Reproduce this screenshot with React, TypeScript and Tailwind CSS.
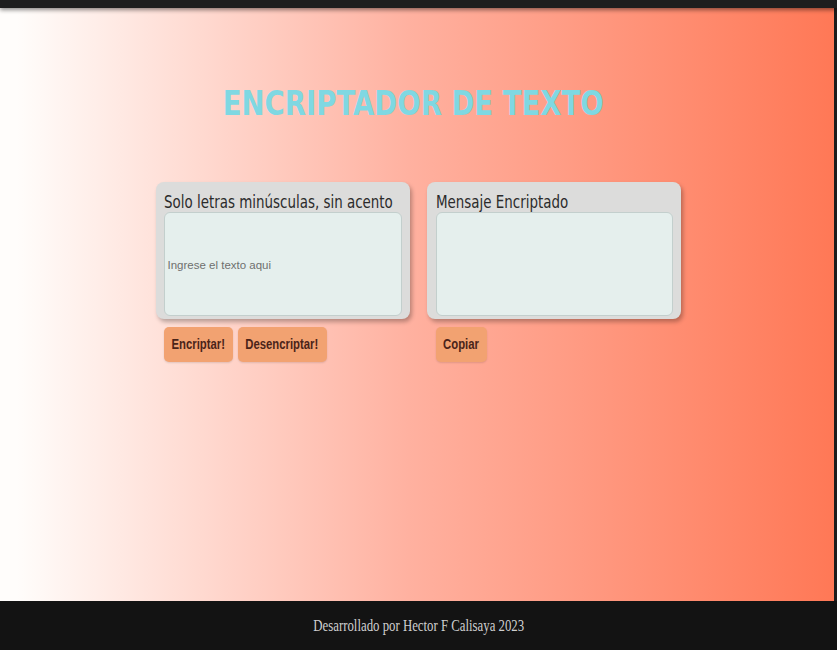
export default function App() {
  return (
    <div className="flex h-[650px] w-full flex-col bg-[#1c1c1c]">
      {/* Top bar */}
      <div className="relative z-10 h-2 w-full bg-[#1e1e1e] shadow-[0_2px_4px_rgba(0,0,0,0.45)]" />

      {/* Main */}
      <main className="mr-[3px] flex flex-1 flex-col items-center bg-[linear-gradient(to_right,#fffdfb_2%,#ffb1a0_49%,#ff7856_100%)]">
        <h1 className="mt-[78px] flex w-full justify-center pr-[8px] text-[34px] leading-[34px] font-bold text-[#7fd8e2] [font-family:'DejaVu_Sans',sans-serif]">
          <span className="inline-block scale-x-[0.81] whitespace-nowrap">ENCRIPTADOR DE TEXTO</span>
        </h1>

        <div className="mt-[62px] ml-[2px] flex gap-[17px]">
          {/* Input column */}
          <div className="flex flex-col">
            <div className="flex h-[137px] w-[254px] flex-col rounded-lg bg-[#dcdcdb] px-2 pt-[11px] pb-[3px] shadow-[2px_3px_4px_rgba(0,0,0,0.28)]">
              <label className="h-[18px] text-[17px] leading-[18px] text-[#2b2b2b] [font-family:'DejaVu_Sans',sans-serif]">
                <span className="inline-block origin-left scale-x-[0.79] whitespace-nowrap">Solo letras minúsculas, sin acento</span>
              </label>
              <textarea
                placeholder="Ingrese el texto aqui"
                className="mt-px h-[104px] w-[238px] resize-none rounded-md border border-[#c3cfcd] bg-[#e5efed] px-[3px] pt-[44px] text-[11.5px] text-[#555] outline-none placeholder:text-[#6f6f6f] [font-family:'Liberation_Sans',Arial,sans-serif]"
              />
            </div>
            <div className="mt-2 flex gap-[5px] pl-2">
              <Button label="Encriptar!" width="w-[69px]" />
              <Button label="Desencriptar!" width="w-[89px]" />
            </div>
          </div>

          {/* Output column */}
          <div className="flex flex-col">
            <div className="flex h-[137px] w-[254px] flex-col rounded-lg bg-[#dcdcdb] px-2 pt-[11px] pb-[3px] shadow-[2px_3px_4px_rgba(0,0,0,0.28)]">
              <label className="h-[18px] pl-px text-[17px] leading-[18px] text-[#2b2b2b] [font-family:'DejaVu_Sans',sans-serif]">
                <span className="inline-block origin-left scale-x-[0.79] whitespace-nowrap">Mensaje Encriptado</span>
              </label>
              <textarea
                readOnly
                className="mt-px ml-px h-[104px] w-[237px] resize-none rounded-md border border-[#c3cfcd] bg-[#e5efed] outline-none"
              />
            </div>
            <div className="mt-2 flex pl-[9px]">
              <Button label="Copiar" width="w-[51px]" />
            </div>
          </div>
        </div>
      </main>

      {/* Footer */}
      <footer className="flex h-[49px] items-center justify-center bg-[#131313] text-[16px] text-[#cfcfcf] [font-family:'Liberation_Serif',serif]">
        <span className="inline-block scale-x-[0.8] whitespace-nowrap">Desarrollado por Hector F Calisaya 2023</span>
      </footer>
    </div>
  );
}

function Button({ label, width }: { label: string; width: string }) {
  return (
    <button
      className={`${width} flex h-[35px] items-center justify-center rounded-[5px] bg-[#f2a271] text-[14.5px] font-bold text-[#4a2419] shadow-[0_1px_2px_rgba(0,0,0,0.12)] [font-family:'Liberation_Sans',Arial,sans-serif]`}
    >
      <span className="inline-block scale-x-[0.78] whitespace-nowrap">{label}</span>
    </button>
  );
}
